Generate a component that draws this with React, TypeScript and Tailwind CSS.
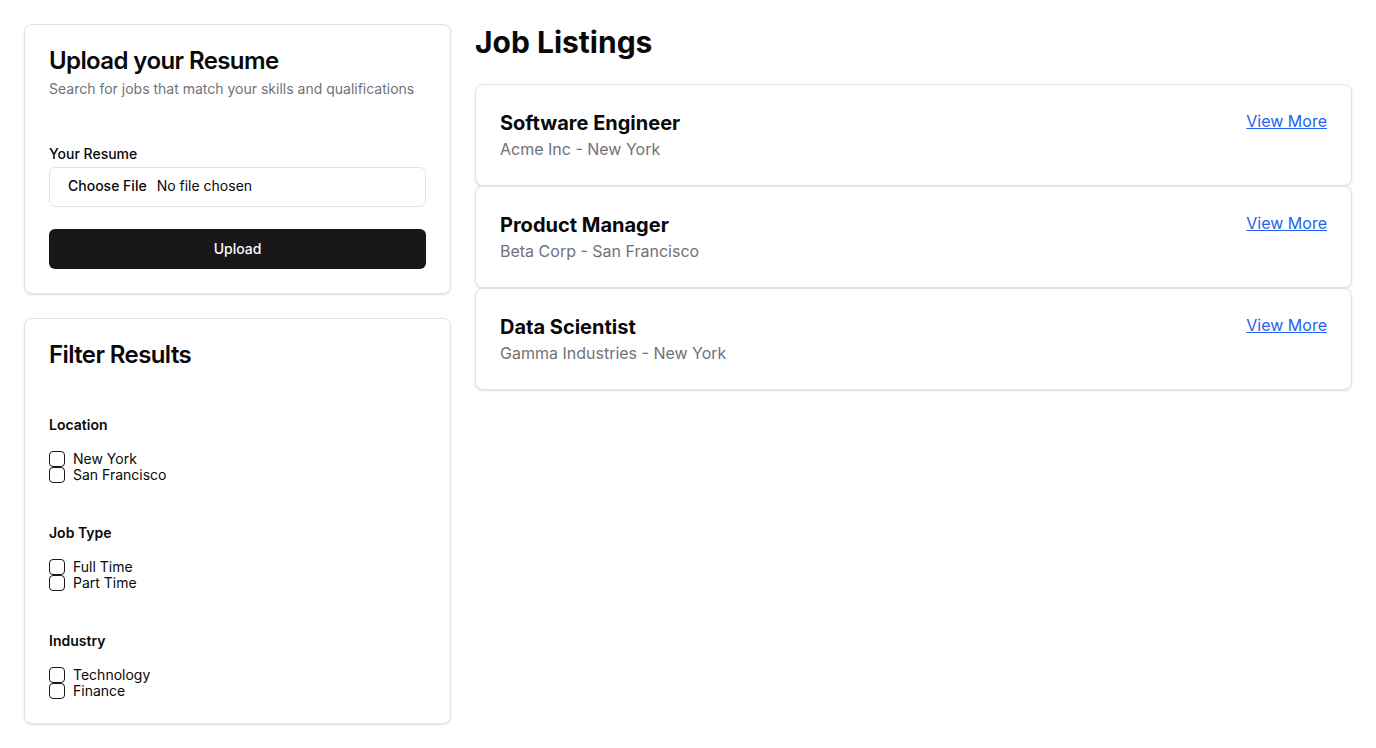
import React from "react";

const jobs = [
  { title: "Software Engineer", sub: "Acme Inc - New York" },
  { title: "Product Manager", sub: "Beta Corp - San Francisco" },
  { title: "Data Scientist", sub: "Gamma Industries - New York" },
];

const filters = [
  { label: "Location", options: ["New York", "San Francisco"] },
  { label: "Job Type", options: ["Full Time", "Part Time"] },
  { label: "Industry", options: ["Technology", "Finance"] },
];

function Box() {
  return <span className="block h-4 w-4 shrink-0 rounded-[4px] border border-[#18181b] bg-white" />;
}

export default function App() {
  return (
    <div className="min-h-[748px] bg-white p-6 font-['Inter',sans-serif] text-[#09090b]">
      <div className="flex gap-6">
        <div className="flex w-[427px] shrink-0 flex-col gap-6">
          <div className="rounded-lg border border-[#e4e4e7] bg-white shadow-sm">
            <div className="flex flex-col gap-1.5 p-6">
              <h2 className="text-2xl font-semibold leading-none tracking-tight">Upload your Resume</h2>
              <p className="text-sm text-[#71717a]">Search for jobs that match your skills and qualifications</p>
            </div>
            <div className="p-6 pt-6">
              <div className="flex flex-col gap-[6px]">
                <label className="text-sm font-medium leading-none">Your Resume</label>
                <input
                  type="file"
                  className="flex h-10 w-full rounded-md border border-[#e4e4e7] bg-white px-3 py-2 text-sm file:mr-1 file:border-0 file:bg-transparent file:px-1.5 file:text-sm file:font-medium"
                />
              </div>
              <button className="mt-[22px] h-10 w-full rounded-md bg-[#18181b] text-sm font-medium text-[#fafafa]">
                Upload
              </button>
            </div>
          </div>
          <div className="rounded-lg border border-[#e4e4e7] bg-white shadow-sm">
            <div className="p-6">
              <h2 className="text-2xl font-semibold leading-none tracking-tight">Filter Results</h2>
            </div>
            <div className="flex flex-col gap-10 p-6">
              {filters.map((f) => (
                <div key={f.label}>
                  <h3 className="text-sm font-semibold leading-5">{f.label}</h3>
                  <div className="mt-4 flex flex-col">
                    {f.options.map((o) => (
                      <div key={o} className="flex h-4 items-center gap-2">
                        <Box />
                        <span className="text-sm leading-none">{o}</span>
                      </div>
                    ))}
                  </div>
                </div>
              ))}
            </div>
          </div>
        </div>
        <div className="flex-1">
          <h1 className="mb-6 text-3xl font-bold leading-9">Job Listings</h1>
          <div className="flex flex-col">
            {jobs.map((j) => (
              <div key={j.title} className="rounded-lg border border-[#e4e4e7] bg-white shadow-sm">
                <div className="flex items-start justify-between p-6">
                  <div>
                    <h3 className="text-xl font-bold leading-7">{j.title}</h3>
                    <p className="text-base text-[#71717a]">{j.sub}</p>
                  </div>
                  <a href="#" className="text-base text-[#2563eb] underline">View More</a>
                </div>
              </div>
            ))}
          </div>
        </div>
      </div>
    </div>
  );
}
